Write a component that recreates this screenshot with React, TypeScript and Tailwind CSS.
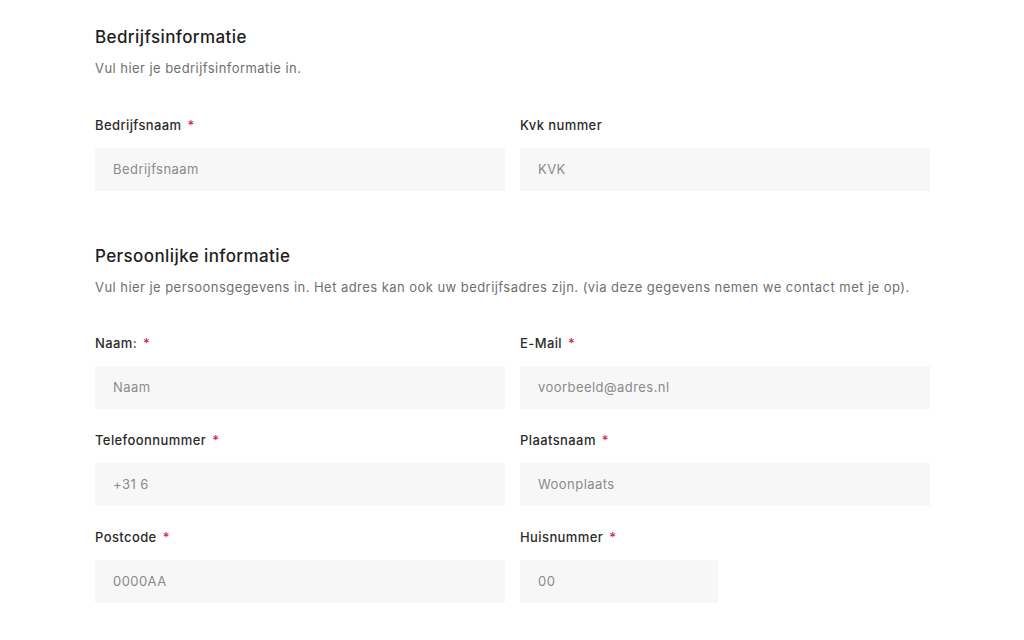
import React from "react";

const font = { fontFamily: "Inter, 'Noto Sans', sans-serif" };

function Field({ label, placeholder, required = true, narrow = false }: { label: string; placeholder: string; required?: boolean; narrow?: boolean }) {
  return (
    <div className="flex flex-col">
      <div className="h-[20px] flex items-center text-[13px] font-medium text-[#2b2b2b] tracking-[0.4px]">
        {label}
        {required && <span className="ml-[6px] text-[#d0284c]">*</span>}
      </div>
      <div className={`mt-[12px] h-[43px] bg-[#f7f7f7] flex items-center pl-[18px] text-[13px] text-[#8a8a8a] tracking-[0.45px] ${narrow ? "w-[198px]" : "w-full"}`}>
        {placeholder}
      </div>
    </div>
  );
}

export default function App() {
  return (
    <div className="w-[1024px] h-[640px] bg-white overflow-hidden" style={font}>
      <div className="ml-[95px] w-[835px] pt-[26px]">
        <h2 className="text-[17px] leading-[22px] font-medium text-[#1e1e1e] tracking-[0.4px]">Bedrijfsinformatie</h2>
        <p className="mt-[10px] text-[13px] leading-[20px] text-[#6f6f6f] tracking-[0.45px]">Vul hier je bedrijfsinformatie in.</p>
        <div className="mt-[38px] grid grid-cols-2 gap-x-[15px]">
          <Field label="Bedrijfsnaam" placeholder="Bedrijfsnaam" />
          <Field label="Kvk nummer" placeholder="KVK" required={false} />
        </div>
        <h2 className="mt-[54px] text-[17px] leading-[22px] font-medium text-[#1e1e1e] tracking-[0.4px]">Persoonlijke informatie</h2>
        <p className="mt-[10px] text-[13px] leading-[20px] text-[#6f6f6f] tracking-[0.45px]">
          Vul hier je persoonsgegevens in. Het adres kan ook uw bedrijfsadres zijn. (via deze gegevens nemen we contact met je op).
        </p>
        <div className="mt-[37px] grid grid-cols-2 gap-x-[15px] gap-y-[22px]">
          <Field label="Naam:" placeholder="Naam" />
          <Field label="E-Mail" placeholder="voorbeeld@adres.nl" />
          <Field label="Telefoonnummer" placeholder="+31 6" />
          <Field label="Plaatsnaam" placeholder="Woonplaats" />
          <Field label="Postcode" placeholder="0000AA" />
          <Field label="Huisnummer" placeholder="00" narrow />
        </div>
      </div>
    </div>
  );
}
